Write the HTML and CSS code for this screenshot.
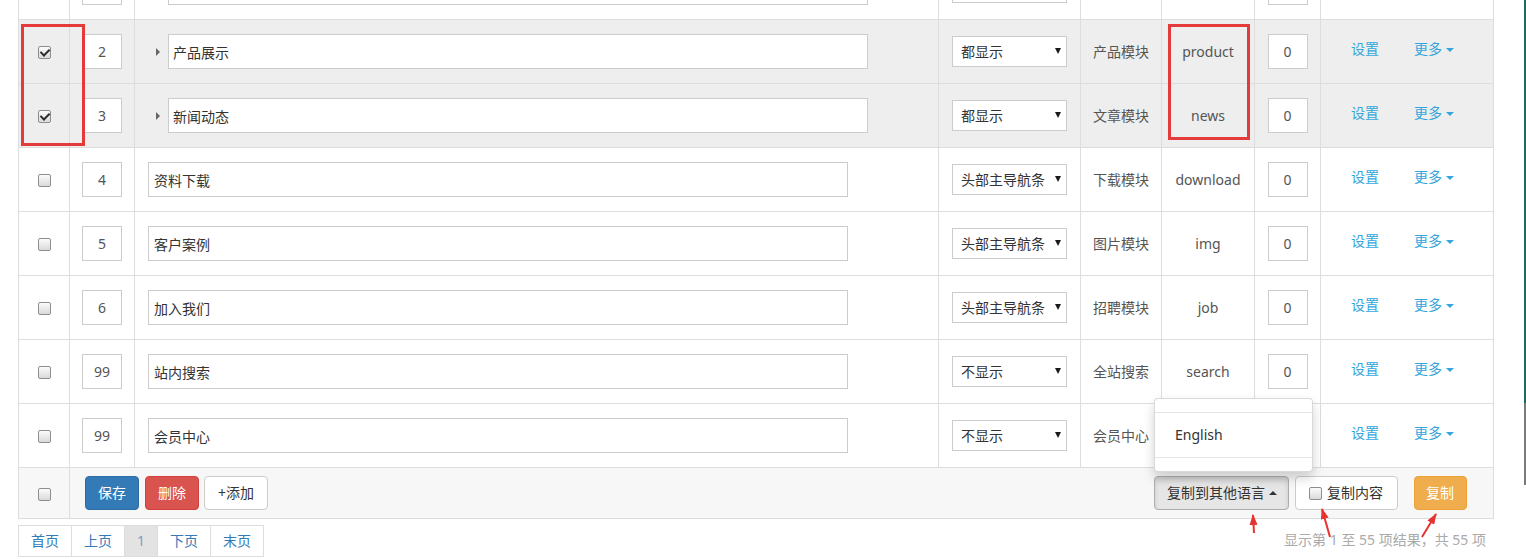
FILE: index.html
```html
<!DOCTYPE html>
<html lang="zh-CN">
  <head>
    <meta charset="utf-8">
    <meta name="viewport" content="width=device-width, initial-scale=1">
    <title>栏目管理</title>
    <link rel="stylesheet" href="styles.css">
  </head>
  <body>
    <div class='page'>
        <table class='list'>
            <colgroup>
                <col style="width:51px">
                <col style="width:65px">
                <col style="width:804px">
                <col style="width:142px">
                <col style="width:81px">
                <col style="width:93px">
                <col style="width:66px">
                <col style="width:173px">
            </colgroup>
            <tbody>
                <tr>
                    <td></td>
                    <td><input class='num' type='text'></td>
                    <td class='name'><div class='name-in sub'><span class='tree'></span><input class='title' type='text'></div></td>
                    <td class='nav'><div class='sel'><span></span><i></i></div></td>
                    <td class='mod'></td>
                    <td class='mod'></td>
                    <td><input class='num' type='text'></td>
                    <td class='ops'></td>
                </tr>
                <tr class='on'>
                    <td><input class='ck' type='checkbox' checked></td>
                    <td><input class='num' type='text' value='2'></td>
                    <td class='name'><div class='name-in sub'><span class='tree'></span><input class='title' type='text' value='产品展示'></div></td>
                    <td class='nav'><div class='sel'><span>都显示</span><i></i></div></td>
                    <td class='mod'>产品模块</td>
                    <td class='mod'>product</td>
                    <td><input class='num' type='text' value='0'></td>
                    <td class='ops'><a class='set' href='#'>设置</a><a class='more' href='#'>更多<b></b></a></td>
                </tr>
                <tr class='on'>
                    <td><input class='ck' type='checkbox' checked></td>
                    <td><input class='num' type='text' value='3'></td>
                    <td class='name'><div class='name-in sub'><span class='tree'></span><input class='title' type='text' value='新闻动态'></div></td>
                    <td class='nav'><div class='sel'><span>都显示</span><i></i></div></td>
                    <td class='mod'>文章模块</td>
                    <td class='mod'>news</td>
                    <td><input class='num' type='text' value='0'></td>
                    <td class='ops'><a class='set' href='#'>设置</a><a class='more' href='#'>更多<b></b></a></td>
                </tr>
                <tr>
                    <td><input class='ck' type='checkbox'></td>
                    <td><input class='num' type='text' value='4'></td>
                    <td class='name'><div class='name-in'><input class='title' type='text' value='资料下载'></div></td>
                    <td class='nav'><div class='sel'><span>头部主导航条</span><i></i></div></td>
                    <td class='mod'>下载模块</td>
                    <td class='mod'>download</td>
                    <td><input class='num' type='text' value='0'></td>
                    <td class='ops'><a class='set' href='#'>设置</a><a class='more' href='#'>更多<b></b></a></td>
                </tr>
                <tr>
                    <td><input class='ck' type='checkbox'></td>
                    <td><input class='num' type='text' value='5'></td>
                    <td class='name'><div class='name-in'><input class='title' type='text' value='客户案例'></div></td>
                    <td class='nav'><div class='sel'><span>头部主导航条</span><i></i></div></td>
                    <td class='mod'>图片模块</td>
                    <td class='mod'>img</td>
                    <td><input class='num' type='text' value='0'></td>
                    <td class='ops'><a class='set' href='#'>设置</a><a class='more' href='#'>更多<b></b></a></td>
                </tr>
                <tr>
                    <td><input class='ck' type='checkbox'></td>
                    <td><input class='num' type='text' value='6'></td>
                    <td class='name'><div class='name-in'><input class='title' type='text' value='加入我们'></div></td>
                    <td class='nav'><div class='sel'><span>头部主导航条</span><i></i></div></td>
                    <td class='mod'>招聘模块</td>
                    <td class='mod'>job</td>
                    <td><input class='num' type='text' value='0'></td>
                    <td class='ops'><a class='set' href='#'>设置</a><a class='more' href='#'>更多<b></b></a></td>
                </tr>
                <tr>
                    <td><input class='ck' type='checkbox'></td>
                    <td><input class='num' type='text' value='99'></td>
                    <td class='name'><div class='name-in'><input class='title' type='text' value='站内搜索'></div></td>
                    <td class='nav'><div class='sel'><span>不显示</span><i></i></div></td>
                    <td class='mod'>全站搜索</td>
                    <td class='mod'>search</td>
                    <td><input class='num' type='text' value='0'></td>
                    <td class='ops'><a class='set' href='#'>设置</a><a class='more' href='#'>更多<b></b></a></td>
                </tr>
                <tr>
                    <td><input class='ck' type='checkbox'></td>
                    <td><input class='num' type='text' value='99'></td>
                    <td class='name'><div class='name-in'><input class='title' type='text' value='会员中心'></div></td>
                    <td class='nav'><div class='sel'><span>不显示</span><i></i></div></td>
                    <td class='mod'>会员中心</td>
                    <td class='mod'></td>
                    <td><input class='num' type='text'></td>
                    <td class='ops'><a class='set' href='#'>设置</a><a class='more' href='#'>更多<b></b></a></td>
                </tr>
                <tr class='foot'>
                    <td><input class='ck' type='checkbox'></td>
                    <td colspan='7'>
                        <div class='bar'>
                            <div class='group'>
                                <a class='btn btn-save' href='#'>保存</a>
                                <a class='btn btn-del' href='#'>删除</a>
                                <a class='btn btn-add' href='#'>+添加</a>
                            </div>
                            <div class='group'>
                                <div class='dropup'>
                                    <div class='menu'>
                                        <div class='divider'></div>
                                        <a href='#'>English</a>
                                        <div class='divider'></div>
                                    </div>
                                    <a class='btn btn-lang' href='#'>复制到其他语言<b></b></a>
                                </div>
                                <label class='copy-box'><input class='ck' type='checkbox'>复制内容</label>
                                <a class='btn btn-copy' href='#'>复制</a>
                            </div>
                        </div>
                    </td>
                </tr>
            </tbody>
        </table>
        <div class='pager-row'>
            <ul class='pager'>
                <li><a href='#'>首页</a></li>
                <li><a href='#'>上页</a></li>
                <li class='cur'><a href='#'>1</a></li>
                <li><a href='#'>下页</a></li>
                <li><a href='#'>末页</a></li>
            </ul>
            <div class='info'>显示第 1 至 55 项结果，共 55 项</div>
        </div>
        <div class='mark mark-ck'></div>
        <div class='mark mark-dir'></div>
        <svg class='arrows' width='1526' height='559' viewBox='0 0 1526 559'>
            <defs>
                <marker id='head' markerUnits='userSpaceOnUse' markerWidth='11' markerHeight='8' refX='10' refY='4' orient='auto'>
                    <path d='M0,0 L11,4 L0,8 z' fill='#e8322f'/>
                </marker>
            </defs>
            <line x1='1243' y1='470' x2='1228' y2='451' stroke='#e8322f' stroke-width='2' marker-end='url(#head)'/>
            <line x1='1254' y1='533' x2='1253' y2='515' stroke='#e8322f' stroke-width='2' marker-end='url(#head)'/>
            <line x1='1330' y1='537' x2='1322' y2='509' stroke='#e8322f' stroke-width='2' marker-end='url(#head)'/>
            <line x1='1422' y1='537' x2='1436' y2='514' stroke='#e8322f' stroke-width='2' marker-end='url(#head)'/>
        </svg>
        <div class='scroll'></div>
    </div>
  </body>
</html>
```

FILE: styles.css
```css
* {
    box-sizing: border-box;
}
body {
    margin: 0;
    background-color: #fff;
    font-family: "Noto Sans", "Noto Sans CJK SC", sans-serif;
    font-size: 14px;
    line-height: 20px;
    color: #333;
}
a {
    text-decoration: none;
}
.page {
    display: flow-root;
    position: relative;
    height: 559px;
    overflow: hidden;
    padding: 0 33px 0 18px;
}
.list {
    width: 100%;
    table-layout: fixed;
    border-collapse: collapse;
    margin-top: -45px;
}
.list td {
    height: 64px;
    padding: 0;
    border: 1px solid #ddd;
    text-align: center;
    vertical-align: middle;
}
.list tr.on td {
    background-color: #eee;
}
.ck {
    -webkit-appearance: none;
    appearance: none;
    position: relative;
    width: 13px;
    height: 13px;
    margin: 0;
    border: 1px solid #8e8e8e;
    border-radius: 2px;
    background: linear-gradient(#fbfbfb, #dadada);
    vertical-align: middle;
}
.ck:checked::after {
    content: "";
    position: absolute;
    left: 3px;
    top: 0px;
    width: 4px;
    height: 7px;
    border: solid #2b2b2b;
    border-width: 0 2px 2px 0;
    transform: rotate(45deg);
}
.num {
    width: 40px;
    height: 35px;
    border: 1px solid #ccc;
    text-align: center;
    font-family: inherit;
    font-size: 14px;
    color: #555;
    background-color: #fff;
}
.list td.name {
    text-align: left;
    padding-left: 13px;
}
.name-in {
    display: flex;
    align-items: center;
}
.tree {
    display: flex;
    justify-content: center;
    width: 20px;
}
.tree::before {
    content: "";
    border-left: 4px solid #666;
    border-top: 4px solid transparent;
    border-bottom: 4px solid transparent;
}
.title {
    width: 700px;
    height: 35px;
    padding: 0 5px;
    border: 1px solid #ccc;
    font-family: inherit;
    font-size: 14px;
    color: #333;
    background-color: #fff;
}
.sub .title {
    padding-left: 4px;
}
.list td.nav {
    text-align: left;
    padding-left: 13px;
}
.sel {
    display: flex;
    justify-content: space-between;
    align-items: center;
    width: 115px;
    height: 31px;
    padding: 0 5px 0 8px;
    border: 1px solid #ccc;
    background-color: #fff;
    color: #333;
}
.sel i {
    border-top: 6px solid #1a1a1a;
    border-left: 3.5px solid transparent;
    border-right: 3.5px solid transparent;
    margin-top: -2px;
}
.mod {
    color: #555;
}
.list td.ops {
    text-align: left;
    padding: 0 0 6px 30px;
}
.set, .more {
    color: #33a6dd;
}
.set {
    margin-right: 35px;
}
.more b, .btn-lang b {
    display: inline-block;
    margin-left: 4px;
    vertical-align: middle;
    border-left: 4px solid transparent;
    border-right: 4px solid transparent;
}
.more b {
    border-top: 4px solid #33a6dd;
}
.list tr.foot td {
    height: 51px;
    background-color: #f7f7f7;
}
.list tr.foot td[colspan] {
    padding: 0 26px 0 15px;
}
.bar {
    display: flex;
    justify-content: space-between;
    align-items: center;
}
.group {
    display: flex;
    align-items: center;
    gap: 6px;
}
.btn {
    display: inline-block;
    padding: 6px 12px;
    line-height: 20px;
    font-size: 14px;
    border: 1px solid #ccc;
    border-radius: 4px;
    color: #333;
    background-color: #fff;
}
.btn-save {
    color: #fff;
    background-color: #337ab7;
    border-color: #2e6da4;
}
.btn-del {
    color: #fff;
    background-color: #d9534f;
    border-color: #d43f3a;
    margin-right: -1px;
}
.btn-add {
    padding: 6px 13px;
}
.dropup {
    position: relative;
}
.btn-lang {
    padding: 6px 11px 6px 12px;
    background-color: #e6e6e6;
    border-color: #adadad;
    box-shadow: inset 0 3px 5px rgba(0,0,0,0.125);
}
.btn-lang b {
    border-bottom: 4px solid #333;
    margin-top: -3px;
}
.menu {
    position: absolute;
    left: 0;
    bottom: 100%;
    margin-bottom: 4px;
    width: 159px;
    padding: 4px 0;
    border: 1px solid rgba(0,0,0,0.15);
    border-radius: 4px;
    background-color: #fff;
    box-shadow: 0 6px 12px rgba(0,0,0,0.175);
    text-align: left;
    z-index: 10;
}
.menu a {
    display: block;
    padding: 3px 20px;
    color: #333;
}
.divider {
    height: 1px;
    margin: 9px 0;
    background-color: #e5e5e5;
}
.copy-box {
    display: flex;
    align-items: center;
    gap: 5px;
    padding: 6px 14px 6px 13px;
    border: 1px solid #ccc;
    border-radius: 4px;
    background-color: #fff;
    color: #333;
}
.btn-copy {
    margin-left: 10px;
    padding: 6px 12px 6px 11px;
    color: #fff;
    background-color: #f0ad4e;
    border-color: #eea236;
}
.pager-row {
    display: flex;
    justify-content: space-between;
    align-items: center;
    margin-top: 6px;
    padding-right: 7px;
}
.pager {
    display: flex;
    margin: 0;
    padding: 0;
    list-style: none;
}
.pager li {
    margin-left: -1px;
}
.pager li:first-child {
    margin-left: 0;
}
.pager a {
    display: block;
    padding: 5px 12px;
    line-height: 20px;
    border: 1px solid #ddd;
    color: #337ab7;
    background-color: #fff;
}
.pager .cur a {
    color: #7f9cc4;
    background-color: #e3e3e3;
}
.info {
    color: #aaa;
    padding-bottom: 3px;
}
.mark {
    position: absolute;
    border: 3px solid #e53a3a;
}
.mark-ck {
    left: 21px;
    top: 24px;
    width: 64px;
    height: 122px;
}
.mark-dir {
    left: 1168px;
    top: 24px;
    width: 82px;
    height: 116px;
}
.arrows {
    position: absolute;
    left: 0;
    top: 0;
    pointer-events: none;
}
.scroll {
    position: absolute;
    right: 0;
    top: 0;
    width: 2px;
    height: 485px;
    background: linear-gradient(#1d6b5f 0, #1d6b5f 403px, #7a7a7a 403px);
}
```
